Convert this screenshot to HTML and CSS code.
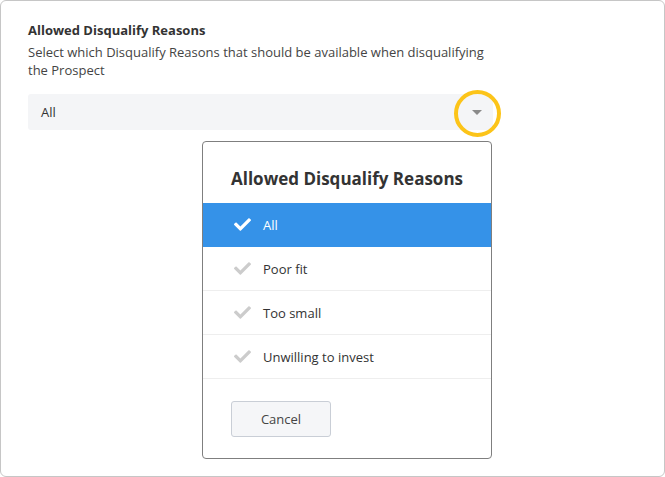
FILE: index.html
```html
<!DOCTYPE html>
<html lang="en">
<head>
  <meta charset="utf-8">
  <title>Allowed Disqualify Reasons</title>
  <link rel="stylesheet" href="styles.css">
</head>
<body>
  <div class="panel">
    <h2 class="field-title">Allowed Disqualify Reasons</h2>
    <p class="field-help">Select which Disqualify Reasons that should be available when disqualifying the Prospect</p>

    <div class="select">
      <span>All</span>
      <span class="caret"></span>
      <span class="highlight"></span>
    </div>

    <div class="dialog">
      <h3 class="dialog-title">Allowed Disqualify Reasons</h3>
      <ul class="options">
        <li class="option selected">
          <svg class="check" viewBox="0 0 512 512"><path d="M173.9 439.4l-166.4-166.4c-10-10-10-26.2 0-36.2l36.2-36.2c10-10 26.2-10 36.2 0L192 312.7 432.1 72.6c10-10 26.2-10 36.2 0l36.2 36.2c10 10 10 26.2 0 36.2l-294.4 294.4c-10 10-26.2 10-36.2 0z"/></svg>
          All
        </li>
        <li class="option">
          <svg class="check" viewBox="0 0 512 512"><path d="M173.9 439.4l-166.4-166.4c-10-10-10-26.2 0-36.2l36.2-36.2c10-10 26.2-10 36.2 0L192 312.7 432.1 72.6c10-10 26.2-10 36.2 0l36.2 36.2c10 10 10 26.2 0 36.2l-294.4 294.4c-10 10-26.2 10-36.2 0z"/></svg>
          Poor fit
        </li>
        <li class="option">
          <svg class="check" viewBox="0 0 512 512"><path d="M173.9 439.4l-166.4-166.4c-10-10-10-26.2 0-36.2l36.2-36.2c10-10 26.2-10 36.2 0L192 312.7 432.1 72.6c10-10 26.2-10 36.2 0l36.2 36.2c10 10 10 26.2 0 36.2l-294.4 294.4c-10 10-26.2 10-36.2 0z"/></svg>
          Too small
        </li>
        <li class="option">
          <svg class="check" viewBox="0 0 512 512"><path d="M173.9 439.4l-166.4-166.4c-10-10-10-26.2 0-36.2l36.2-36.2c10-10 26.2-10 36.2 0L192 312.7 432.1 72.6c10-10 26.2-10 36.2 0l36.2 36.2c10 10 10 26.2 0 36.2l-294.4 294.4c-10 10-26.2 10-36.2 0z"/></svg>
          Unwilling to invest
        </li>
      </ul>
      <div class="dialog-footer">
        <button class="btn">Cancel</button>
      </div>
    </div>
  </div>
</body>
</html>
```

FILE: styles.css
```css
html, body {margin: 0; padding: 0; background: #ffffff;}
body {font-family: "Open Sans", "Noto Sans", Arial, sans-serif; color: #333333; font-size: 13px;}

.panel {position: relative; box-sizing: border-box; width: 665px; height: 477px; border: 1px solid #c6c6c6; border-radius: 6px; padding: 20px 27px;}

.field-title {margin: 0; font-size: 13px; font-weight: bold; line-height: 18px; color: #333333;}
.field-help {margin: 4px 0 0 0; width: 470px; line-height: 18px; color: #444444;}

.select {position: relative; display: flex; align-items: center; width: 465px; height: 36px; margin-top: 15px; padding-left: 13px; box-sizing: border-box; background: #f4f5f7; border-radius: 3px; color: #333333;}
.caret {position: absolute; left: 444px; top: 16px; width: 0; height: 0; border-left: 5px solid transparent; border-right: 5px solid transparent; border-top: 5px solid #8a8a8a;}
.highlight {position: absolute; left: 426px; top: -4px; width: 39px; height: 39px; border: 4px solid #fcc419; border-radius: 50%;}

.dialog {position: absolute; left: 201px; top: 140px; width: 290px; height: 318px; box-sizing: border-box; border: 1px solid #7f7f7f; border-radius: 4px; background: #ffffff;}
.dialog-title {margin: 0; height: 61px; padding-left: 28px; display: flex; align-items: center; padding-top: 12px; box-sizing: border-box; font-size: 17px; font-weight: bold; color: #333333;}

.options {list-style: none; margin: 0; padding: 0;}
.option {display: flex; align-items: center; height: 44px; box-sizing: border-box; padding-left: 31px; border-bottom: 1px solid #eeeeee; color: #333333;}
.option .check {width: 17px; height: 17px; margin-right: 12px; fill: #cccccc;}
.option.selected {background: #3592e8; color: #ffffff; border-bottom-color: #3592e8;}
.option.selected .check {fill: #ffffff;}

.dialog-footer {padding: 22px 0 0 28px;}
.btn {width: 100px; height: 36px; font-family: inherit; font-size: 13px; color: #444444; background: #f5f6f8; border: 1px solid #c9ced6; border-radius: 3px;}
```
